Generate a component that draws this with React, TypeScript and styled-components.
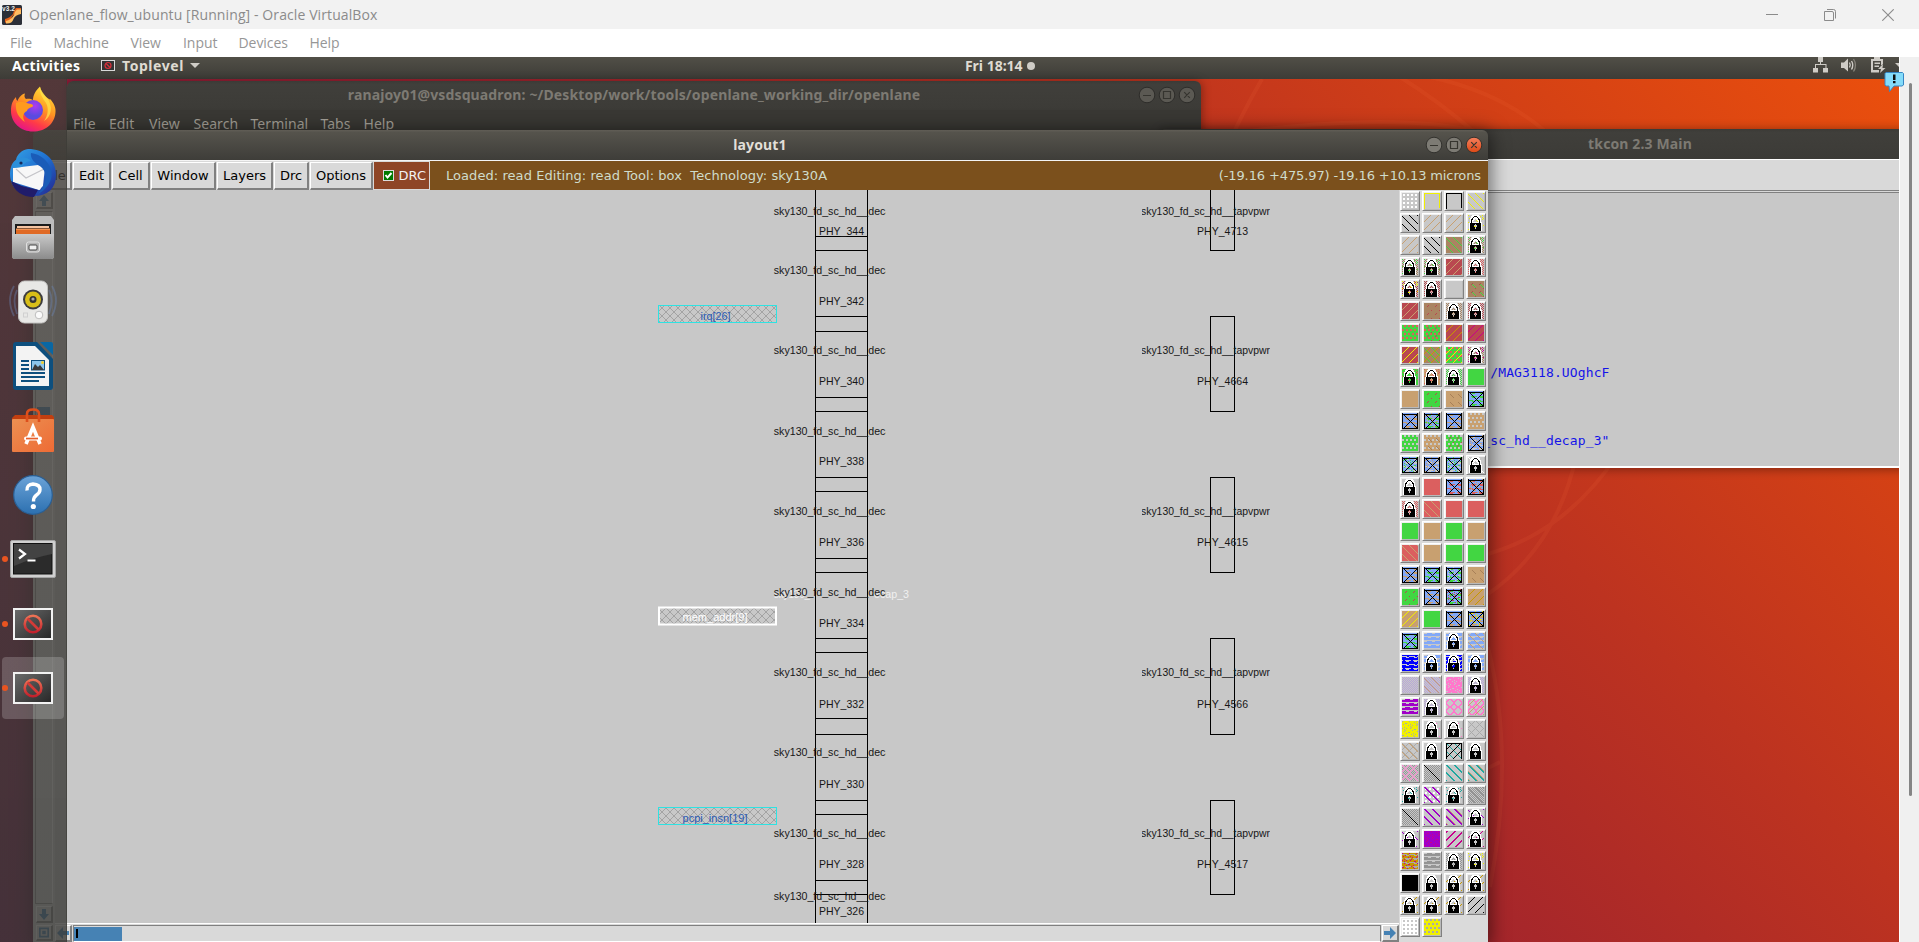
import React from 'react';
import styled, { createGlobalStyle } from 'styled-components';

const Global = createGlobalStyle`
  *, *::before, *::after { box-sizing: border-box; }
  html, body { margin: 0; padding: 0; overflow: hidden; background: #f0f0f0; }
  svg { display: block; }
`;

const UBUNTU = '"Noto Sans", "Open Sans", sans-serif';
const TK = '"DejaVu Sans", sans-serif';

/* ---------- Host window ---------- */

const Host = styled.div`
  width: 1919px;
  height: 942px;
  display: flex;
  flex-direction: column;
  font-family: "Open Sans", sans-serif;
  white-space: pre;
`;

const HostTitle = styled.header`
  height: 29px;
  flex: none;
  display: flex;
  align-items: center;
  padding: 0 25px 0 2px;
  background: #f2f2f2;
  color: #8b8b8b;
  font-size: 14px;
  letter-spacing: 0.1px;
`;

const HostName = styled.span`
  margin-left: 7px;
  flex: 1;
  line-height: 28px;
`;

const HostControls = styled.div`
  display: flex;
  gap: 46px;
`;

const HostMenu = styled.nav`
  height: 28px;
  flex: none;
  display: flex;
  background: #fff;
  color: #969696;
  font-size: 14px;
  line-height: 28px;
  padding-left: 10px;
`;

const HostMenuItem = styled.span<{ $w: number }>`
  width: ${(p) => p.$w}px;
  letter-spacing: -0.05px;
`;

const HostBody = styled.div`
  flex: 1;
  display: flex;
  background: #f0f0f0;
`;

const PageScroll = styled.div`
  width: 20px;
  padding: 26px 0 0 9px;
  border-left: 1px solid #fff;
`;

const PageThumb = styled.div`
  width: 3px;
  height: 713px;
  border-radius: 2px;
  background: #858585;
`;

/* ---------- Guest desktop ---------- */

const Guest = styled.div`
  position: relative;
  width: 1899px;
  height: 885px;
  overflow: hidden;
  font-family: ${UBUNTU};
  background: linear-gradient(45deg, #77164a 0%, #8e1c38 33%, #a5262b 54%, #bd3320 70%, #d64214 86%, #ea4f0d 99%);
`;

const Arcs = styled.svg`
  position: absolute;
  inset: 0;
`;

const TopBar = styled.div`
  position: absolute;
  left: 0;
  right: 0;
  top: 0;
  height: 22px;
  display: flex;
  align-items: center;
  background: linear-gradient(#514f47, #3d3c37);
  color: #dfdbd2;
  font-weight: 700;
  font-size: 14px;
`;

const Activities = styled.span`
  width: 89px;
  padding-left: 12px;
  color: #fff;
  letter-spacing: 0.33px;
  line-height: 17px;
  margin-top: -5px;
`;

const AppName = styled.span`
  margin: -5px 6px 0 7px;
  letter-spacing: 0.55px;
  line-height: 17px;
`;

const Clock = styled.span`
  display: flex;
  align-items: center;
  gap: 4px;
  margin: -6px auto 0 765px;
  line-height: 17px;
  &::after { content: ''; width: 8px; height: 8px; border-radius: 50%; background: #cfccc6; margin-top: 1px; }
`;

const Tray = styled.svg`
  margin-top: -4px;
`;

/* ---------- Guest windows ---------- */

const Win = styled.section<{ $x: number; $y: number; $w: number; $h: number; $active?: boolean }>`
  position: absolute;
  left: ${(p) => p.$x}px;
  top: ${(p) => p.$y}px;
  width: ${(p) => p.$w}px;
  height: ${(p) => p.$h}px;
  display: flex;
  flex-direction: column;
  border-radius: 6px 6px 0 0;
  box-shadow: ${(p) => (p.$active ? '0 3px 18px 3px rgba(0,0,0,.5)' : '0 1px 10px 1px rgba(0,0,0,.35)')};
`;

const WinTitle = styled.div<{ $active?: boolean; $h: number; $center: number }>`
  position: relative;
  flex: none;
  display: flex;
  align-items: center;
  justify-content: flex-end;
  height: ${(p) => p.$h}px;
  padding: 0 5px 1px 0;
  border-radius: 6px 6px 0 0;
  background: ${(p) => (p.$active ? 'linear-gradient(#615e56, #55534c 8%, #3e3d39)' : 'linear-gradient(#3b3a36, #403f3b 12%, #3c3b37)')};
  color: ${(p) => (p.$active ? '#e2dfd8' : '#7d7a73')};
  font-size: 14px;
  letter-spacing: 0.13px;
`;

const WinName = styled.span<{ $center: number }>`
  position: absolute;
  left: ${(p) => p.$center}px;
  transform: translateX(-50%);
  font-weight: 700;
  line-height: 19px;
  margin-top: -1px;
`;

const TermMenu = styled.div`
  flex: 1;
  display: flex;
  background: #393834;
  color: #a5a198;
  font-size: 14px;
  line-height: 19px;
  padding: 4px 0 0 6px;
`;

const TermMenuItem = styled.span<{ $w: number }>`
  width: ${(p) => p.$w}px;
  letter-spacing: 0.05px;
`;

const TkMenuStrip = styled.div`
  height: 34px;
  flex: none;
  background: #d9d9d9;
  border-top: 1px solid #fff;
  border-bottom: 3px double #808080;
`;

const Console = styled.div`
  flex: 1;
  background: #c8c8c8;
  border-bottom: 2px solid #fff;
  color: #1414e8;
  font: 13px/20px "DejaVu Sans Mono", monospace;
  letter-spacing: 0.13px;
  display: flex;
  flex-direction: column;
  gap: 48px;
  padding: 170px 0 0 4px;
`;

const MagicBar = styled.div`
  flex: none;
  height: 30px;
  display: flex;
  align-items: stretch;
  gap: 1px;
  padding-left: 6px;
  background: #d9d9d9;
  border-top: 1px solid #f4f4f4;
  font: 13px/25px ${TK};
  color: #000;
`;

const TkButton = styled.span<{ $w: number }>`
  width: ${(p) => p.$w}px;
  margin-top: 1px;
  height: 28px;
  border: 1px solid #fff;
  border-right: 2px solid #808080;
  border-bottom: 2px solid #808080;
  background: #d9d9d9;
  text-align: center;
`;

const DrcToggle = styled.span`
  width: 57px;
  display: flex;
  align-items: center;
  justify-content: flex-end;
  gap: 5px;
  padding: 0 3px 0 0;
  margin: 0 -1px 0 -1px;
  border: 1px solid #d9d9d9;
  background: #8e4526;
  color: #f2f2f2;
`;

const Status = styled.span`
  flex: 1;
  display: flex;
  justify-content: space-between;
  padding: 1px 7px 0 16px;
  line-height: 27px;
  background: #7b501c;
  color: #cfdccb;
  > :first-child { letter-spacing: 0.06px; }
  > :last-child { letter-spacing: -0.11px; }
`;

const MagicBody = styled.div`
  flex: 1;
  display: flex;
  background: #d9d9d9;
`;

const ScrollColumn = styled.div`
  width: 22px;
  flex: none;
  display: flex;
  flex-direction: column;
  align-items: center;
  gap: 2px;
  padding: 2px 0 1px;
  background: #d9d9d9;
`;

const VTrough = styled.div`
  flex: 1;
  width: 18px;
  padding: 195px 2px 0 1px;
  border: 1px solid #909090;
  border-right-color: #fff;
  &::before { content: ''; display: block; height: 9px; background: #4682b4; }
`;

const CanvasColumn = styled.div`
  flex: 1;
  display: flex;
  flex-direction: column;
`;

const ScrollRow = styled.div`
  height: 19px;
  flex: none;
  display: flex;
  gap: 1px;
  padding-top: 1px;
  border-top: 1px solid #fff;
`;

const HTrough = styled.div`
  flex: 1;
  height: 17px;
  padding: 1px 1px 1px 0;
  border: 1px solid #808080;
  border-bottom-color: #fff;
`;

const HThumb = styled.div`
  width: 48px;
  height: 14px;
  padding: 2px 0 0 2px;
  background: #4682b4;
  &::before { content: ''; display: block; width: 2px; height: 9px; background: #000; }
`;

const ArrowBox = styled.svg`
  border: 1px solid #fff;
  border-right: 2px solid #808080;
  border-bottom: 2px solid #808080;
  background: #d9d9d9;
  flex: none;
`;

const Palette = styled.div`
  width: 89px;
  flex: none;
  display: grid;
  grid-template-columns: repeat(4, 20px);
  grid-auto-rows: 20px;
  gap: 2px;
  align-content: start;
  padding: 1px 0 0 1px;
  background: #dadada;
`;

const TileButton = styled.span`
  border: 1px solid #fff;
  border-right-color: #808080;
  border-bottom-color: #808080;
  box-shadow: inset 1px 1px 0 #efefef, inset -1px -1px 0 #b9b9b9;
  padding: 1px;
`;

/* ---------- Dock ---------- */

const Dock = styled.aside`
  position: absolute;
  left: 0;
  top: 22px;
  bottom: 0;
  width: 67px;
  background: linear-gradient(rgba(67, 63, 58, 0.79), rgba(56, 56, 53, 0.8));
  border-right: 1px solid rgba(60, 60, 55, 0.6);
  display: flex;
  flex-direction: column;
  align-items: center;
  padding-top: 1px;
`;

const DockItem = styled.div<{ $current?: boolean }>`
  position: relative;
  width: 62px;
  height: 62px;
  margin: -2px 0 4.35px;
  border-radius: 4px;
  display: flex;
  align-items: center;
  justify-content: center;
  background: ${(p) => (p.$current ? 'rgba(255,255,255,.19)' : 'none')};
`;

const Running = styled.i`
  position: absolute;
  left: 0;
  top: 28px;
  width: 6px;
  height: 6px;
  border-radius: 50%;
  background: #e95420;
`;

const Bubble = styled.svg`
  position: absolute;
  left: 1884px;
  top: 71px;
`;

/* ---------- Layer tiles, drawn pixel by pixel on a 16x16 grid ---------- */

const C: Record<string, string> = {
  bg: '#c8c8c8', K: '#000000', W: '#ffffff', br: '#aa8462', rd: '#b94850', lr: '#db5f5f', gn: '#42d642',
  tn: '#c8a070', dt: '#a88058', yl: '#f0f000', bl: '#82a8f8', db: '#0000ff', pu: '#a000c8', pk: '#ff78cc',
  mg: '#c8008c', te: '#20a8a0', gy: '#949494', lg: '#aaaaaa', lv: '#b8a6d8', go: '#c89800',
};

const LOCK = [
  '....wwwwwww.....',
  '...wwwkkkwww....',
  '...wwkwwwkww....',
  '..wwkwwwwwkww...',
  '..wkkww.wwkkw...',
  '..wkww...wwkw...',
  '..wkw.....wkw...',
  '..wkwwwwwwwkww..',
  '.wkkkkkkkkkkkw..',
  '.wkkkkk.kkkkkw..',
  '.wkkkk...kkkkw..',
  '.wkkkk...kkkkw..',
  '.wkkkkk.kkkkkw..',
  '.wkkkkk.kkkkkw..',
  '.wkkkkkkkkkkkw..',
  '.wkkkkkkkkkkkw..',
];

type Test = (x: number, y: number) => boolean;
const SHAPES: Record<string, Test> = {
  fill: () => true,
  dots: (x, y) => (x + 1) % 4 > 1 && (y + 1) % 4 > 1,
  stg: (x, y) => (x + (Math.floor(y / 4) % 2) * 2) % 4 > 1 && y % 4 < 2,
  ck: (x, y) => (x + y) % 2 === 0,
  bs: (x, y) => (x - y + 17) % 8 === 0,
  bs2: (x, y) => (x - y + 16) % 8 < 2,
  bt: (x, y) => (x - y + 18) % 8 === 4,
  fs: (x, y) => (x + y) % 8 === 6,
  fs2: (x, y) => (x + y) % 8 < 2,
  sfs: (x, y) => (x + y) % 8 === 6 && x % 8 > 2 && y % 8 > 1,
  sbs: (x, y) => (x - y + 16) % 8 === 1 && x % 8 > 3,
  x: (x, y) => (x + y) % 8 === 6 || (x - y + 16) % 8 === 0,
  one: (x, y) => x === y,
  wave: (x, y) => (y % 4 === 1 && (x + y) % 8 < 6) || (y % 4 === 2 && (x + y * 2) % 8 < 3),
  thick: (x, y) => y % 4 !== 3 && !(y % 4 === 0 && (x + y) % 8 < 3),
  spk: (x, y) => (x * 5 + y * 3 + ((x * y) % 3)) % 7 === 0,
  ring: (x, y) => { const d = Math.hypot((x % 8) - 3.5, (y % 8) - 3.5); return d > 2.9 && d < 4.2; },
  frame: (x, y) => y === 0 || x === 0 || (x === 15 && y < 15),
  box: (x, y) => y === 1 || x === 0 || x === 15 || y === 15 || (y > 1 && (x === y || x + y === 16)),
};

const pixels = (test: Test) => {
  let d = '';
  for (let y = 0; y < 16; y++) for (let x = 0; x < 16; x++) if (test(x, y)) d += `M${x} ${y}h1v1h-1z`;
  return d;
};
const SHAPE_PATH = Object.fromEntries(Object.entries(SHAPES).map(([k, t]) => [k, pixels(t)]));
const LOCK_BLACK = pixels((x, y) => LOCK[y][x] === 'k');
const LOCK_WHITE = pixels((x, y) => LOCK[y][x] === 'w');

function Tile({ spec }: { spec: string }) {
  return (
    <TileButton>
      <svg width="16" height="16" viewBox="0 0 16 16" shapeRendering="crispEdges">
        <path d={SHAPE_PATH.fill} fill={C.bg} />
        {spec.split(' ').filter(Boolean).map((part, i) => {
          if (part === 'lock') return <g key={i}><path d={LOCK_WHITE} fill="#fff" /><path d={LOCK_BLACK} fill="#000" /></g>;
          const [shape, colour] = part.split(':');
          return <path key={i} d={SHAPE_PATH[shape]} fill={C[colour]} />;
        })}
      </svg>
    </TileButton>
  );
}

const X = (c: string, c2?: string) => `fill:bl wave:${c}${c2 ? ` spk:${c2}` : ''} box:K`;
const TILES: string[] = [
  'dots:W', 'frame:yl', 'frame:K', 'bs:yl',
  'bs:K', 'fs:tn', 'fs:tn', 'spk:yl lock',
  'fs:tn', 'bs:K', 'fill:br bs:gn', 'ck:br spk:gn lock',
  'ck:br spk:gn lock', 'ck:br spk:gn lock', 'fill:rd fs:tn', 'ck:lr lock',
  'ck:rd spk:yl lock', 'ck:rd lock', '', 'fill:br sbs:gn sfs:rd',
  'fill:rd fs:tn', 'fill:br sfs:rd', 'ck:br lock', 'ck:rd lock',
  'fill:gn stg:lr', 'fill:gn stg:lr sfs:rd', 'fill:rd fs:go', 'fill:rd fs:mg',
  'fill:rd fs:yl', 'fill:br fs:go bs:gn', 'fill:gn stg:lr fs:yl', 'ck:br spk:mg lock',
  'fill:gn spk:lr lock', 'fill:tn spk:lr lock', 'ck:gn lock', 'fill:gn',
  'fill:tn', 'fill:gn sfs:rd', 'fill:tn sbs:dt', X('gn'),
  X('tn'), X('gn', 'tn'), X('tn'), 'fill:tn stg:bg',
  'fill:gn stg:bg', 'fill:tn stg:bg sbs:dt', 'fill:gn stg:bg sfs:rd', X('bg', 'tn'),
  X('bg', 'gn'), X('bg', 'tn'), X('bg', 'gn'), 'one:W lock',
  'lock', 'fill:lr', X('lr'), X('lr', 'tn'),
  'ck:lr lock', 'fill:lr bs:tn', 'fill:lr', 'fill:lr',
  'fill:gn', 'fill:tn', 'fill:gn', 'fill:tn',
  'fill:lr bs:tn', 'fill:tn', 'fill:gn', 'fill:gn',
  X('tn'), X('gn'), X('gn', 'bg'), 'fill:tn sbs:dt',
  'fill:gn sfs:rd', X('tn'), X('gn', 'rd'), 'fill:tn fs:go',
  'fill:tn fs:yl', 'fill:gn', X('tn'), X('tn', 'yl'),
  X('gn'), 'thick:bl', 'thick:bl lock', 'thick:bl bs:tn',
  'fill:db wave:bg', 'thick:bl lock', 'fill:db wave:bg lock', 'thick:bl lock',
  'ck:lv', 'ck:lv bs:tn', 'fill:pk spk:bg', 'ck:lv lock',
  'thick:pu', 'ck:lv lock', 'ring:pk', 'ring:pk fs:tn',
  'fill:yl spk:lg', 'sfs:pk lock', 'sfs:pk lock', 'x:lg',
  'x:lg bs:tn', 'lock', 'x:te frame:K fs:K', 'lock',
  'ck:gy x:pk', 'ck:gy one:K', 'bs2:te', 'bs2:te bt:tn',
  'spk:te lock', 'dots:W bs2:pu', 'spk:te lock', 'ck:gy bs:gy',
  'ck:gy one:K', 'bs2:pu', 'bs2:pu bt:tn', 'bs:pu lock',
  'bs:pu lock', 'fill:pu spk:mg', 'fs2:mg', 'fs:mg lock',
  'fill:go spk:mg wave:lg', 'thick:gy', 'ck:gy lock', 'spk:yl lock',
  'fill:K', 'lock', 'fs:go lock', 'fs:go lock',
  'fs:go lock', 'fs:go lock', 'fs:go lock', 'fs:K',
  'fill:W dots:bg', 'fill:yl stg:lg',
];

/* ---------- Layout drawing ---------- */

const DECAPS = [
  { name: 21, inst: 41, id: 344 }, { name: 79.5, inst: 111, id: 342 }, { name: 159.5, inst: 191, id: 340 },
  { name: 240.5, inst: 271, id: 338 }, { name: 321, inst: 352, id: 336 }, { name: 401.5, inst: 432.5, id: 334 },
  { name: 481.5, inst: 513.5, id: 332 }, { name: 562, inst: 593.5, id: 330 }, { name: 643, inst: 674, id: 328 },
  { name: 706, inst: 721, id: 326 },
];
const RAILS = [46, 60, 126, 141, 207, 221, 287, 301, 368, 382, 448, 462, 528, 544, 610, 624, 690, 704];
const TAPS = [
  { top: -4, bottom: 60, name: 21, inst: 41, id: 4713 },
  { top: 126, bottom: 221, name: 159.5, inst: 191, id: 4664 },
  { top: 287, bottom: 382, name: 321, inst: 352, id: 4615 },
  { top: 448, bottom: 544, name: 481.5, inst: 513.5, id: 4566 },
  { top: 610, bottom: 704, name: 643, inst: 674, id: 4517 },
];
const PINS = [
  { y: 115, h: 18, text: 'irq[26]', tx: 645.5, w: 30, colour: '#2a5ab4', border: '#2ee2e2', sel: false },
  { y: 416, h: 18, text: 'mem_addr[9]', tx: 627.5, w: 65, colour: '#ffffff', border: '#ffffff', sel: true },
  { y: 617, h: 18, text: 'pcpi_insn[19]', tx: 627.5, w: 65, colour: '#2a5ab4', border: '#2ee2e2', sel: false },
];

const Drawing = styled.svg`
  background: #c8c8c8;
  flex: none;
  font-family: "Liberation Sans", Arial, sans-serif;
  font-size: 11px;
`;

function LayoutView() {
  return (
    <Drawing width="1344" height="733" viewBox="0 0 1344 733">
      <defs>
        <pattern id="hatch" width="8" height="8" patternUnits="userSpaceOnUse" x="3" y="2">
          <path d="M0 0L8 8M8 0L0 8" stroke="#a3a3a3" strokeWidth="1" shapeRendering="crispEdges" />
        </pattern>
        <clipPath id="decapClip"><rect x="718" y="0" width="112.800" height="733" /></clipPath>
        <clipPath id="tapClip"><rect x="1087" y="0" width="128" height="733" /></clipPath>
      </defs>
      {PINS.map((p) => (
        <g key={p.text}>
          <rect x={p.sel ? 604 : 603.5} y={p.y + (p.sel ? 1.5 : 0.5)} width={p.sel ? 117 : 118} height={p.h - 1}
            fill="url(#hatch)" stroke={p.border} strokeWidth={p.sel ? 2 : 1} />
          <text x={p.tx} y={p.y + 14.5} fill={p.colour} fontSize="11" textLength={p.w} lengthAdjust="spacingAndGlyphs">{p.text}</text>
        </g>
      ))}
      <g fill="#f0f0f0">
        <text x="719" y="408" textLength="36" lengthAdjust="spacingAndGlyphs">sky130_</text>
        <text x="819" y="408" textLength="35" lengthAdjust="spacingAndGlyphs">ecap_3</text>
      </g>
      <g stroke="#000" strokeWidth="1" shapeRendering="crispEdges" fill="none">
        <path d="M760.5 0V733M812.5 0V733" />
        <path d={RAILS.map((y) => `M760 ${y + 0.5}H813`).join('')} />
        <path d={TAPS.map((t) => `M1155.5 ${t.top + 0.5}H1179.5V${t.bottom + 0.5}H1155.5Z`).join('')} />
      </g>
      <g fill="#161616">
        {DECAPS.map((d) => (
          <React.Fragment key={d.id}>
            <text x="718.800" y={d.name + 4} textLength="117.500" lengthAdjust="spacingAndGlyphs" clipPath="url(#decapClip)">sky130_fd_sc_hd__deca</text>
            <text x="764" y={d.inst + 4} textLength="45" lengthAdjust="spacingAndGlyphs">{`PHY_${d.id}`}</text>
          </React.Fragment>
        ))}
        {TAPS.map((t) => (
          <React.Fragment key={t.id}>
            <text x="1086" y={t.name + 4} textLength="129" lengthAdjust="spacingAndGlyphs" clipPath="url(#tapClip)">sky130_fd_sc_hd__tapvpwr</text>
            <text x="1142" y={t.inst + 4} textLength="51" lengthAdjust="spacingAndGlyphs">{`PHY_${t.id}`}</text>
          </React.Fragment>
        ))}
      </g>
    </Drawing>
  );
}

/* ---------- Icons ---------- */

function WinButtons({ active }: { active?: boolean }) {
  const ring = active ? '#33322e' : '#2e2d2a';
  const face = active ? '#7d7b74' : '#5b5953';
  const mark = active ? '#36352f' : '#35342f';
  return (
    <svg width="58" height="18" viewBox="0 0 58 18">
      <defs>
        <linearGradient id="orangeBtn" x1="0" y1="0" x2="0" y2="1"><stop offset="0" stopColor="#f4805e" /><stop offset="1" stopColor="#dd4814" /></linearGradient>
      </defs>
      <circle cx="9" cy="9" r="7.8" fill={face} stroke={ring} />
      <circle cx="29" cy="9" r="7.8" fill={face} stroke={ring} />
      <circle cx="49" cy="9" r="7.8" fill={active ? 'url(#orangeBtn)' : face} stroke={ring} />
      <path d="M5 9.5H13M25.5 5.5H32.5V12.5H25.5ZM46.2 6.2L51.8 11.8M51.8 6.2L46.2 11.8" fill="none" stroke={mark} strokeWidth="1.2" />
    </svg>
  );
}

const ARROWS = {
  up: 'M7 2L12 8H9V13H5V8H2Z',
  down: 'M7 13L12 7H9V2H5V7H2Z',
  left: 'M1 7L7 1V5H13V9H7V13Z',
  right: 'M13 7L7 1V5H1V9H7V13Z',
};
function Arrow({ dir }: { dir: keyof typeof ARROWS }) {
  return <ArrowBox width="17" height="17" viewBox="0 0 14 14"><path d={ARROWS[dir]} fill="#4682b4" /></ArrowBox>;
}

const Firefox = () => (
  <svg width="46" height="46" viewBox="0 0 46 46">
    <defs>
      <linearGradient id="ff1" x1=".8" y1="0" x2=".3" y2="1"><stop offset="0" stopColor="#ffe63a" /><stop offset=".45" stopColor="#ff9422" /><stop offset=".75" stopColor="#ff3b47" /><stop offset="1" stopColor="#e3128c" /></linearGradient>
      <radialGradient id="ff2" cx=".6" cy=".3"><stop offset="0" stopColor="#b03af0" /><stop offset="1" stopColor="#5a4be0" /></radialGradient>
    </defs>
    <path d="M1 25C1 18 3 14 6 11C6 13 6.500 14 7.500 15C9 11 12 8 15 7.500C14 10 14.500 12 16 13C19 12.500 21 13 23 14C23 9 26 4 30 .5C30.500 5 33 8 36 11C39 13 40 14 40 13C44 17 46 22 45.500 26C45 38 35 45.500 23 45.500C11 45.500 1 37 1 25Z" fill="url(#ff1)" />
    <circle cx="23" cy="24" r="10" fill="url(#ff2)" />
    <path d="M6 17C11 14 16 17 21 18C23 18.500 24 20 22 21C19 22 17 23 17 25C13 27 12 31 15 36C9 32 5 26 6 17Z" fill="#ff9a1f" />
    <path d="M30 1C29 8 33 12 36 17C39 22 38 30 34 35C42 30 43 20 37 12C34 8 31 5 30 1Z" fill="#ffe14a" opacity=".75" />
  </svg>
);
const Thunderbird = () => (
  <svg width="50" height="50" viewBox="0 0 50 50">
    <defs><linearGradient id="tb" x1="0" y1="0" x2="1" y2="1"><stop offset="0" stopColor="#35a3e6" /><stop offset=".5" stopColor="#1f6fd0" /><stop offset="1" stopColor="#24248c" /></linearGradient></defs>
    <path d="M20 1C36 1 48 11 48 27C48 40 40 48 26 48C12 48 2 39 2 26C2 20 4 14 8 12C9 6 14 2 20 1Z" fill="url(#tb)" />
    <path d="M5 20L30 17L37 19L35 38L31 42L5 34Z" fill="#f7f7f7" />
    <path d="M8 21L18 30L36 21" fill="none" stroke="#c4c4c8" strokeWidth="1.200" />
    <path d="M8 12C14 8 20 9 23 13C19 13 15 16 14 19L5 20C5 16 6 14 8 12Z" fill="#2b8fda" />
    <path d="M23 5C32 6 41 13 43 22C46 32 38 42 30 46C40 34 40 22 30 17C26 14 22 10 23 5Z" fill="#1a5cb8" />
    <circle cx="13" cy="15" r="1.600" fill="#16295c" />
    <path d="M3 33L14 38L30 42L26 49C14 49 6 43 3 33Z" fill="#201c6a" />
    <path d="M5 32L32 42L34 36L10 30Z" fill="#f7f7f7" />
  </svg>
);
const Files = () => (
  <svg width="42" height="44" viewBox="0 0 42 44">
    <defs><linearGradient id="fl" x1="0" y1="0" x2="0" y2="1"><stop offset="0" stopColor="#c9c9c9" /><stop offset="1" stopColor="#8b8b8b" /></linearGradient></defs>
    <path d="M3 0H39L42 4V40Q42 43 39 43H3Q0 43 0 40V4Z" fill="#bdbdbd" />
    <path d="M3 8H39V18H3Z" fill="#1c1c1c" />
    <path d="M5 10H37V12H5Z" fill="#f5c4a2" /><path d="M4 13H38V18H4Z" fill="#e06a25" /><path d="M4 12.500H38V14H4Z" fill="#f49454" />
    <path d="M0 18H42V40Q42 43 39 43H3Q0 43 0 40Z" fill="url(#fl)" />
    <rect x="14.500" y="26" width="13" height="10" rx="2" fill="#b4b4b4" stroke="#e0e0e0" />
    <rect x="17" y="29" width="8" height="5" rx="1" fill="#f0f0f0" stroke="#444" />
  </svg>
);
const Rhythmbox = () => (
  <svg width="50" height="44" viewBox="0 0 50 44">
    <path d="M6 6Q-2 20 6 36M9 10Q4 20 9 34M44 6Q52 20 44 36M41 10Q46 20 41 34" fill="none" stroke="#6c87b8" strokeWidth="1.800" opacity=".4" />
    <rect x="10.500" y="1" width="29" height="42" rx="6" fill="#e8e8e6" stroke="#c2c2c0" />
    <circle cx="25" cy="19.500" r="10" fill="#3c3c3e" />
    <circle cx="25" cy="19.500" r="8" fill="#d8be18" />
    <circle cx="25" cy="19.500" r="3.500" fill="#333" /><circle cx="25" cy="19" r="1.600" fill="#aaa" />
    <circle cx="31" cy="35" r="3.800" fill="#fafafa" stroke="#bdbdbd" />
    <rect x="15.500" y="33" width="4" height="4" fill="none" stroke="#d0d0d0" />
  </svg>
);
const Writer = () => (
  <svg width="40" height="48" viewBox="0 0 40 48">
    <path d="M3 0H24L40 17V45Q40 48 37 48H3Q0 48 0 45V3Q0 0 3 0Z" fill="#0d4f7e" />
    <path d="M27 0H38Q40 0 40 2V13Z" fill="#0a67a3" />
    <path d="M3 4H22L36 18V44H3Z" fill="#f3f3f3" />
    <path d="M8 19H16M8 23H16M8 27H16M8 31H32M8 35H32M8 39H26" stroke="#0d4f7e" strokeWidth="1.900" />
    <rect x="18.500" y="18.500" width="13" height="9.500" fill="#8cc5ea" stroke="#0d4f7e" />
    <path d="M19 28L22 22L25 25L27 23L31 28Z" fill="#3a3a3a" /><circle cx="29.500" cy="20.500" r="1.500" fill="#f2cf2e" />
  </svg>
);
const Software = () => (
  <svg width="42" height="45" viewBox="0 0 42 45">
    <defs><linearGradient id="sw" x1="0" y1="0" x2="1" y2="1"><stop offset="0" stopColor="#eb9052" /><stop offset="1" stopColor="#ee6b35" /></linearGradient></defs>
    <path d="M0 10L3 7H40L42 9V12H0Z" fill="#c23f10" />
    <rect y="11" width="42" height="33" rx="1" fill="url(#sw)" />
    <path d="M15 14V6Q15 1.500 21 1.500Q27 1.500 27 6V14" fill="none" stroke="#dd4f1c" strokeWidth="2.600" />
    <path d="M14 36L21 19L28 36" fill="none" stroke="#fff" strokeWidth="3.600" />
    <rect x="12" y="28.500" width="18" height="4" rx="2" fill="#fff" /><rect x="14" y="29.700" width="12" height="1.700" fill="#e8602c" />
  </svg>
);
const HelpIcon = () => (
  <svg width="42" height="42" viewBox="0 0 42 42">
    <defs><linearGradient id="hp" x1="0" y1="0" x2="0" y2="1"><stop offset="0" stopColor="#6ba3d8" /><stop offset="1" stopColor="#2c70b0" /></linearGradient></defs>
    <circle cx="21" cy="21" r="19.300" fill="url(#hp)" stroke="#2a5f94" strokeWidth="1.200" />
    <path d="M15 16.500Q14.500 10.500 21 10Q28 10.500 28 15.500Q28 18.500 24.500 21Q21.500 23 21.500 27.500" fill="none" stroke="#fff" strokeWidth="3.400" />
    <circle cx="21.300" cy="32.500" r="2.600" fill="#fff" />
  </svg>
);
const Terminal = () => (
  <svg width="46" height="38" viewBox="0 0 46 38">
    <rect x=".5" y=".5" width="45" height="37" rx="1.500" fill="#d0d0d0" stroke="#a4a4a4" />
    <rect x="3.500" y="3.500" width="38.500" height="30.500" fill="#2b2b2b" stroke="#111" />
    <path d="M4 4H42V14Q25 17 4 26Z" fill="#434343" />
    <path d="M9 9.500L15 14L9 18.500" fill="none" stroke="#fff" strokeWidth="2.200" />
    <path d="M17.500 20.500H25.500" stroke="#fff" strokeWidth="2" />
  </svg>
);
const MagicIcon = () => (
  <svg width="40" height="32" viewBox="0 0 40 32">
    <defs>
      <linearGradient id="mgk" x1="0" y1="0" x2="1" y2="1"><stop offset="0" stopColor="#6c6c6c" /><stop offset="1" stopColor="#262626" /></linearGradient>
      <linearGradient id="mgr" x1="0" y1="0" x2="0" y2="1"><stop offset="0" stopColor="#ee7355" /><stop offset="1" stopColor="#c3202c" /></linearGradient>
    </defs>
    <rect x="1" y="1" width="38" height="30" fill="url(#mgk)" stroke="#f2f2f2" strokeWidth="2" />
    <circle cx="20" cy="16" r="8.300" fill="none" stroke="url(#mgr)" strokeWidth="2.600" />
    <path d="M14.500 10.500L25.500 21.500" stroke="#d33a37" strokeWidth="2.600" />
  </svg>
);

const DOCK: { icon: React.ReactNode; running?: boolean; current?: boolean }[] = [
  { icon: <Firefox /> }, { icon: <Thunderbird /> }, { icon: <Files /> }, { icon: <Rhythmbox /> }, { icon: <Writer /> },
  { icon: <Software /> }, { icon: <HelpIcon /> }, { icon: <Terminal />, running: true },
  { icon: <MagicIcon />, running: true }, { icon: <MagicIcon />, running: true, current: true },
];

const HOST_MENU: [string, number][] = [['File', 43.5], ['Machine', 77], ['View', 52.5], ['Input', 55.5], ['Devices', 71], ['Help', 40]];
const TERM_MENU: [string, number][] = [['File', 36], ['Edit', 40], ['View', 44.5], ['Search', 57], ['Terminal', 70], ['Tabs', 43], ['Help', 40]];
const MAGIC_MENU: [string, number][] = [['File', 33], ['Edit', 38], ['Cell', 38], ['Window', 65], ['Layers', 56], ['Drc', 35], ['Options', 63]];

export default function App() {
  return (
    <Host>
      <Global />
      <HostTitle>
        <svg width="20" height="20" viewBox="0 0 20 20">
          <rect width="20" height="20" rx="1.500" fill="#2c2f38" />
          <path d="M3 17.500Q8 19 9 14Q10 8 19 8V3H14Q12 5 11 9Q8 13 3 14Z" fill="#e8641c" />
          <path d="M4 18.500Q10 19 11.500 14Q13 10 19 9V4.500H15Q13 6 12 10Q9 15 4 16Z" fill="#ffbd62" />
          <text x="0" y="6" fontSize="6.500" fontWeight="700" fill="#eee" fontFamily="Liberation Sans">v3.2</text>
        </svg>
        <HostName>Openlane_flow_ubuntu [Running] - Oracle VirtualBox</HostName>
        <HostControls>
          <svg width="12" height="12" viewBox="0 0 12 12"><path d="M0 5.500H12" stroke="#8b8b8b" /></svg>
          <svg width="12" height="12" viewBox="0 0 12 12"><path d="M3 .5H9.500Q11.500 .5 11.500 2.500V9.500M.5 2.500H8Q9.500 2.500 9.500 4V11.500H.5Z" fill="none" stroke="#8b8b8b" /></svg>
          <svg width="12" height="12" viewBox="0 0 12 12"><path d="M.3.3L11.700 11.700M11.700.3L.3 11.700" stroke="#8b8b8b" strokeWidth="1.100" /></svg>
        </HostControls>
      </HostTitle>
      <HostMenu>{HOST_MENU.map(([t, w]) => <HostMenuItem key={t} $w={w}>{t}</HostMenuItem>)}</HostMenu>
      <HostBody>
        <Guest>
          <Arcs width="1899" height="885">
            <g fill="none" stroke="#ff7a40" strokeOpacity=".1" strokeWidth="4">
              <path d="M1400 20Q1440 45 1474 75M1430 20Q1500 35 1546 75M1240 75Q1400 55 1480 75" />
              <path d="M1576 400Q1556 490 1488 537M1616 400Q1565 475 1488 497M1488 590Q1515 700 1490 830M1486 712L1500 705" />
              <path d="M1225 95Q1240 60 1262 22" />
            </g>
          </Arcs>
          <TopBar>
            <Activities>Activities</Activities>
            <svg width="26" height="22" viewBox="0 0 26 22">
              <rect x="12.500" y="3.500" width="13" height="10" fill="#333" stroke="#d8d8d8" />
              <circle cx="19" cy="8.500" r="3" fill="none" stroke="#d8303a" strokeWidth="1.200" />
              <path d="M17 6.500L21 10.500" stroke="#d8303a" strokeWidth="1.200" />
            </svg>
            <AppName>Toplevel</AppName>
            <svg width="10" height="22" viewBox="0 0 10 22"><path d="M0 6H10L5 11Z" fill="#cfccc6" /></svg>
            <Clock>Fri 18:14</Clock>
            <Tray width="88" height="18" viewBox="0 0 88 18">
              <g fill="#cfccc6">
                <path d="M7 0H12V5H7ZM2 11H7V15.500H2ZM12 11H17V15.500H12ZM4 7H15.500V11H14.500V8H10V8H5V11H4ZM9 5H10V8H9Z" />
                <path d="M30 5.500H33L37 1.500V14.500L33 11H30Z" />
                <path d="M60 2H63V0H69V2H72V8H70V4H62V13H68V15.500H60ZM63.500 5.500H69V7H63.500ZM63.500 8.500H68V10H63.500ZM72 7L67 12H70L69 16L74.500 11H71.500Z" />
                <path d="M84 6H88V10Z" />
              </g>
              <path d="M38.500 5.500Q40 8 38.500 10.500M40.500 4Q43 8 40.500 12.500" fill="none" stroke="#cfccc6" strokeWidth="1.400" />
              <path d="M42.500 2Q46.500 8 42.500 14.500" fill="none" stroke="#85827a" strokeWidth="1.300" />
            </Tray>
          </TopBar>

          <Win $x={67} $y={24} $w={1134} $h={60}>
            <WinTitle $h={29} $center={567}><WinName $center={567}>ranajoy01@vsdsquadron: ~/Desktop/work/tools/openlane_working_dir/openlane</WinName><WinButtons /></WinTitle>
            <TermMenu>{TERM_MENU.map(([t, w]) => <TermMenuItem key={t} $w={w}>{t}</TermMenuItem>)}</TermMenu>
          </Win>

          <Win $x={1160} $y={72} $w={760} $h={339}>
            <WinTitle $h={30} $center={480}><WinName $center={480}>tkcon 2.3 Main</WinName></WinTitle>
            <TkMenuStrip />
            <Console>
              <div>{'                                         /MAG3118.UOghcF'}</div>
              <div>{'                                        _sc_hd__decap_3"'}</div>
            </Console>
          </Win>

          <Win $x={33} $y={73} $w={1455} $h={812} $active>
            <WinTitle $active $h={30} $center={727}><WinName $center={727}>layout1</WinName><WinButtons active /></WinTitle>
            <MagicBar>
              {MAGIC_MENU.map(([t, w]) => <TkButton key={t} $w={w}>{t}</TkButton>)}
              <DrcToggle>
                <svg width="11" height="11" viewBox="0 0 11 11">
                  <rect x=".5" y=".5" width="10" height="10" fill="#007a00" stroke="#dcdcdc" />
                  <path d="M2.500 5L4.500 7.500L8.500 3" fill="none" stroke="#fff" strokeWidth="1.900" />
                </svg>
                DRC
              </DrcToggle>
              <Status>
                <span>{'Loaded: read Editing: read Tool: box  Technology: sky130A'}</span>
                <span>(-19.16 +475.97) -19.16 +10.13 microns</span>
              </Status>
            </MagicBar>
            <MagicBody>
              <ScrollColumn>
                <Arrow dir="up" />
                <VTrough />
                <Arrow dir="down" />
                <ArrowBox width="17" height="16" viewBox="0 0 14 14"><path d="M2.500 2.500H11.500V11.500H2.500ZM6 6H8V8H6Z" fill="none" stroke="#4682b4" strokeWidth="1.800" /></ArrowBox>
              </ScrollColumn>
              <CanvasColumn>
                <LayoutView />
                <ScrollRow>
                  <Arrow dir="left" />
                  <HTrough><HThumb /></HTrough>
                  <Arrow dir="right" />
                </ScrollRow>
              </CanvasColumn>
              <Palette>{TILES.map((s, i) => <Tile key={i} spec={s} />)}</Palette>
            </MagicBody>
          </Win>

          <Dock>
            {DOCK.map((d, i) => (
              <DockItem key={i} $current={d.current}>{d.icon}{d.running && <Running />}</DockItem>
            ))}
          </Dock>
        </Guest>
        <PageScroll><PageThumb /></PageScroll>
      </HostBody>
      <Bubble width="21" height="22" viewBox="0 0 21 22">
        <path d="M2 1.500H18.500L19.500 2.500V14L18 15H10L5.500 20.500L5 15H2L1 14V2.500Z" fill="#84dcfa" stroke="#3787c4" />
        <path d="M9 3.500H11.500V9H9ZM9 10H11.500V12.300H9Z" fill="#111" />
      </Bubble>
    </Host>
  );
}
